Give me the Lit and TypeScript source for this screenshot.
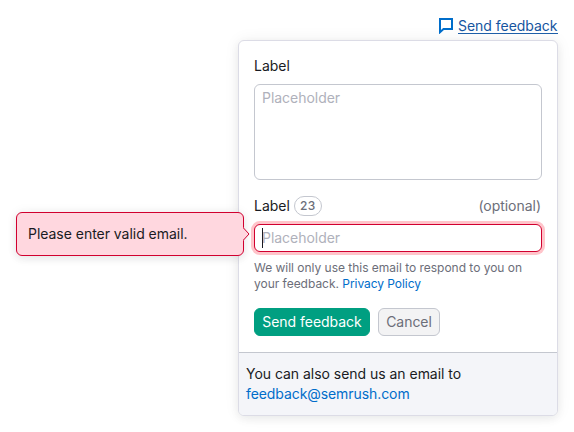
import { LitElement, html, css } from "lit";
import { customElement, property } from "lit/decorators.js";

@customElement("feedback-form")
class FeedbackForm extends LitElement {
  @property({ type: Number }) counter = 23;

  static styles = css`
    :host {
      display: block;
      box-sizing: border-box;
      width: 320px;
      height: 376px;
      border: 1px solid #dcdce6;
      border-radius: 6px;
      background: #fff;
      box-shadow: 0 3px 8px rgba(25, 27, 35, 0.06), 0 0 16px rgba(25, 27, 35, 0.06);
    }
    * { box-sizing: border-box; }
    .body { padding: 15px 15px 16px; height: 311px; }
    .row { display: flex; align-items: center; height: 20px; line-height: 20px; }
    .second { margin-top: 16px; }
    .badge {
      margin-left: 4px;
      width: 28px;
      height: 20px;
      border: 1px solid #c4c7cf;
      border-radius: 10px;
      color: #6c6e79;
      font-size: 12px;
      font-weight: 500;
      line-height: 18px;
      text-align: center;
      letter-spacing: 0.3px;
    }
    .optional { margin-left: auto; padding-right: 1px; color: #6c6e79; }
    .field {
      width: 288px;
      border: 1px solid #c4c7cf;
      border-radius: 6px;
      padding: 3px 7px;
      line-height: 20px;
      color: #afb1bb;
      background: #fff;
    }
    .area { height: 96px; margin-top: 8px; }
    .input {
      position: relative;
      height: 28px;
      margin-top: 8px;
      border-color: #d1002f;
      box-shadow: 0 0 0 3px #ffc4ca;
    }
    .caret { position: absolute; left: 7px; top: 3px; width: 1px; height: 20px; background: #191b23; }
    .hint { margin-top: 8px; font-size: 12px; line-height: 16px; letter-spacing: -0.02px; color: #6c6e79; white-space: nowrap; }
    .link { color: #006dca; }
    .hint .link { letter-spacing: -0.06px; }
    .actions { display: flex; gap: 8px; margin-top: 16px; }
    .button {
      height: 28px;
      padding: 3px 7px;
      border: 1px solid #c4c7cf;
      border-radius: 6px;
      font: inherit;
      line-height: 20px;
      letter-spacing: inherit;
      white-space: nowrap;
      color: #6c6e79;
      background: #f3f3f4;
    }
    .primary { width: 116px; color: #fff; background: #009f81; border-color: #009f81; }
    .secondary { width: 62px; }
    .footer {
      height: 63px;
      padding: 11px 7px;
      border-top: 1px solid #c4c7cf;
      border-radius: 0 0 5px 5px;
      background: #f4f5f9;
      line-height: 20px;
    }
    .footer .link { letter-spacing: -0.08px; }
  `;

  render() {
    return html`
      <div class="body">
        <div class="row">Label</div>
        <div class="field area">Placeholder</div>
        <div class="row second">
          <span>Label</span>
          <span class="badge">${this.counter}</span>
          <span class="optional">(optional)</span>
        </div>
        <div class="field input"><span class="caret"></span>Placeholder</div>
        <div class="hint">
          We will only use this email to respond to you on<br />your feedback.
          <span class="link">Privacy Policy</span>
        </div>
        <div class="actions">
          <button class="button primary">Send feedback</button>
          <button class="button secondary">Cancel</button>
        </div>
      </div>
      <div class="footer">
        <div>You can also send us an email to</div>
        <div class="link">feedback@semrush.com</div>
      </div>
    `;
  }
}

@customElement("app-root")
class AppRoot extends LitElement {
  static styles = css`
    :host {
      display: block;
      position: relative;
      box-sizing: border-box;
      width: 574px;
      height: 432px;
      overflow: hidden;
      padding: 16px 16px 0 0;
      background: #fff;
      color: #191b23;
      font-family: Inter, "Liberation Sans", sans-serif;
      font-size: 14px;
      line-height: 20px;
      letter-spacing: -0.03px;
    }
    .trigger { display: flex; justify-content: flex-end; height: 24px; color: #1555a0; }
    .icon { display: block; width: 16px; height: 16px; margin: 2px 4px 0 0; }
    .label { width: 100px; height: 17px; border-bottom: 1px solid #1e5fa8; line-height: 20px; white-space: nowrap; }
    .form { margin-left: auto; }
    .tooltip {
      position: absolute;
      left: 16px;
      top: 212px;
      box-sizing: border-box;
      width: 228px;
      height: 44px;
      padding: 11px;
      border: 1px solid #d1002f;
      border-radius: 6px;
      background: #ffd7df;
      box-shadow: 0 3px 8px rgba(25, 27, 35, 0.08), 0 0 12px rgba(25, 27, 35, 0.06);
    }
    .arrow { position: absolute; left: 225px; top: 14px; width: 8px; height: 14px; }
  `;

  render() {
    return html`
      <div class="trigger">
        <svg class="icon" viewBox="0 0 16 16" fill="none" stroke="#006dca" stroke-width="2">
          <path d="M2 1H14V11H5.5L2 14.2Z" />
        </svg>
        <span class="label">Send feedback</span>
      </div>
      <feedback-form class="form"></feedback-form>
      <div class="tooltip">
        Please enter valid email.
        <svg class="arrow" viewBox="0 0 8 14">
          <path d="M0 .5H1.5V1L7 7 1.5 13V13.5H0Z" fill="#ffd7df" />
          <path d="M1.5 1 7 7 1.5 13" fill="none" stroke="#d1002f" />
        </svg>
      </div>
    `;
  }
}
